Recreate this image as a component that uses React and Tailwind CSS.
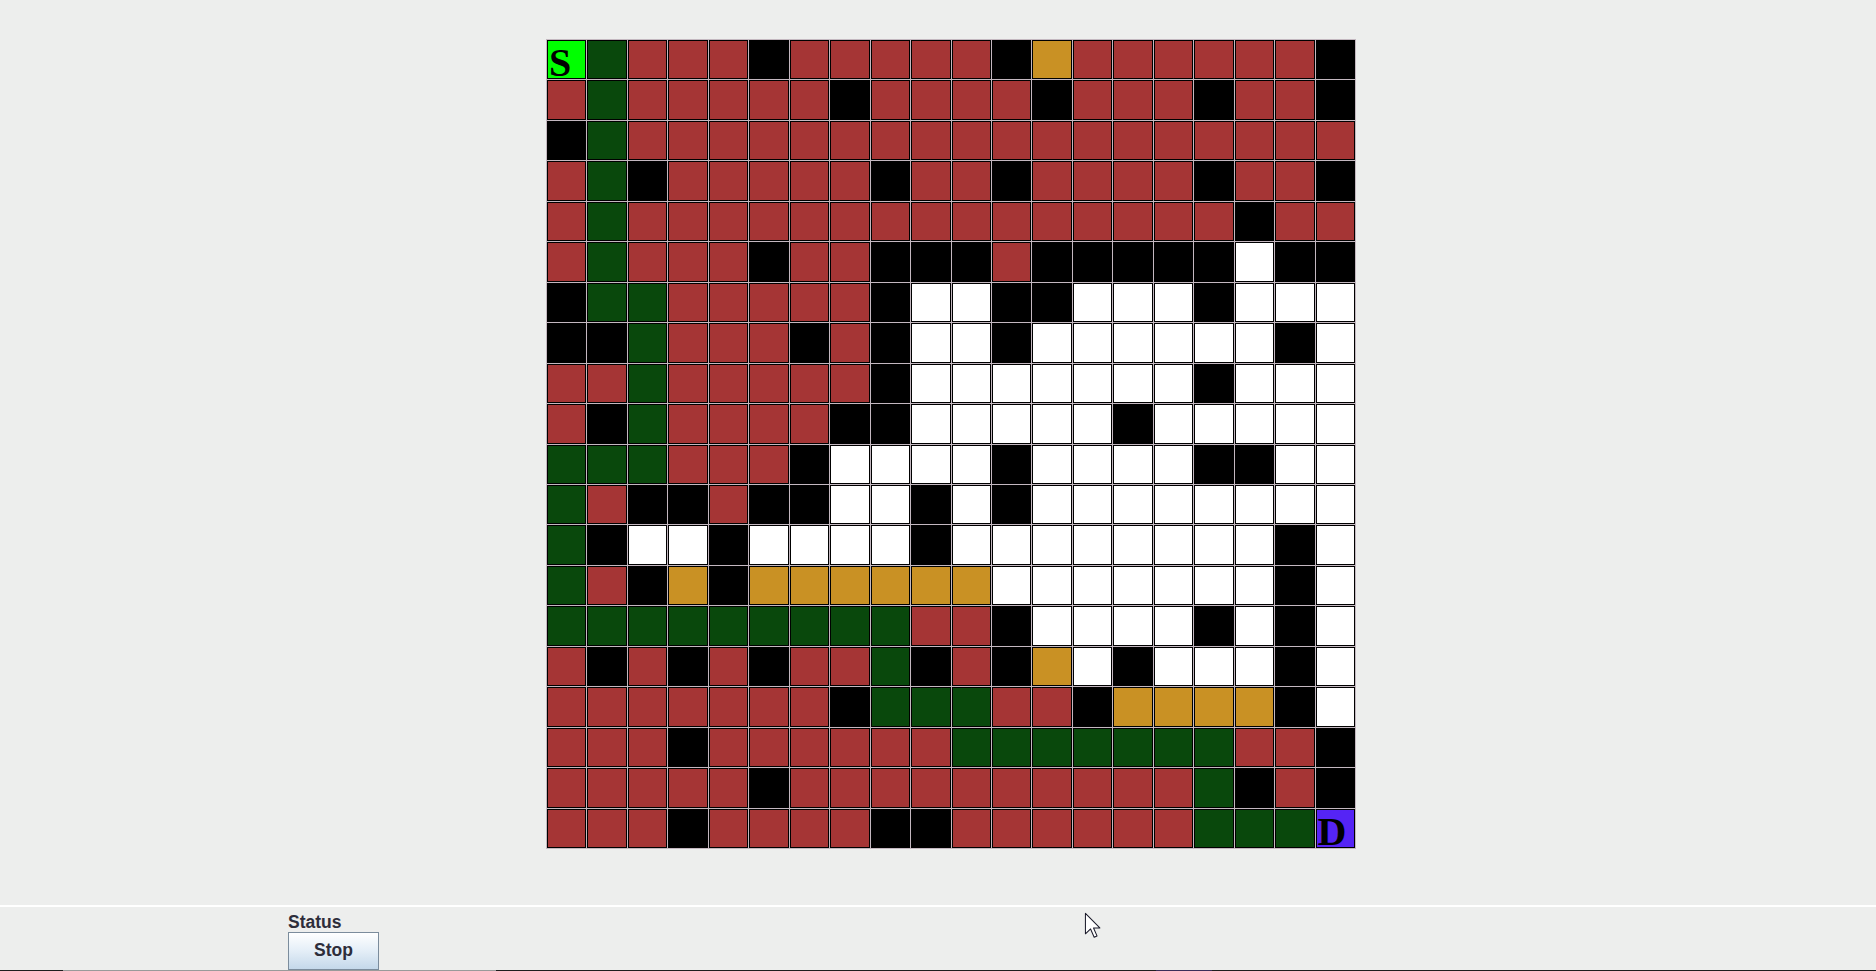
import React from "react"

// maze state, one string per row
const ROWS = [
  "SGRRRKRRRRRKYRRRRRRK",
  "RGRRRRRKRRRRKRRRKRRK",
  "KGRRRRRRRRRRRRRRRRRR",
  "RGKRRRRRKRRKRRRRKRRK",
  "RGRRRRRRRRRRRRRRRKRR",
  "RGRRRKRRKKKRKKKKKWKK",
  "KGGRRRRRKWWKKWWWKWWW",
  "KKGRRRKRKWWKWWWWWWKW",
  "RRGRRRRRKWWWWWWWKWWW",
  "RKGRRRRKKWWWWWKWWWWW",
  "GGGRRRKWWWWKWWWWKKWW",
  "GRKKRKKWWKWKWWWWWWWW",
  "GKWWKWWWWKWWWWWWWWKW",
  "GRKYKYYYYYYWWWWWWWKW",
  "GGGGGGGGGRRKWWWWKWKW",
  "RKRKRKRRGKRKYWKWWWKW",
  "RRRRRRRKGGGRRKYYYYKW",
  "RRRKRRRRRRGGGGGGGRRK",
  "RRRRRKRRRRRRRRRRGKRK",
  "RRRKRRRRKKRRRRRRGGGD",
]

const CELL = {
  R: "bg-[#a53535]",
  G: "bg-[#09480c]",
  K: "bg-black",
  W: "bg-white",
  Y: "bg-[#c99124]",
  S: "bg-[#00ff00]",
  D: "bg-[#5524f5]",
}

function Cell({ code }) {
  const label = code === "S" || code === "D" ? code : null
  return (
    <div className={`${CELL[code]} border border-black flex items-start`}>
      {label && (
        <span className="pl-px pt-[7px] text-[40px] leading-[30px] font-bold text-black [font-family:'Liberation_Serif',serif]">
          {label}
        </span>
      )}
    </div>
  )
}

export default function App() {
  return (
    <div className="relative w-[1876px] h-[971px] overflow-hidden bg-[#edeeed] flex flex-col [font-family:'Liberation_Sans',Arial,sans-serif]">
      {/* board */}
      <div className="h-[905px] flex justify-center pl-[26px] pt-[39px]">
        <div className="w-[810px] h-[810px] p-px gap-px bg-[#c4b8c0] grid grid-cols-20 grid-rows-20">
          {ROWS.map((row, r) =>
            row.split("").map((code, c) => <Cell key={`${r}-${c}`} code={code} />)
          )}
        </div>
      </div>

      <div className="h-[2px] bg-white" />

      {/* status panel */}
      <div className="flex-1 pl-[288px] pt-[5px] flex flex-col items-start">
        <div className="h-[20px] leading-[20px] text-[17.5px] font-bold text-[#2d2d3a]">Status</div>
        <button className="w-[91px] h-[38px] border border-[#7b8c9c] bg-gradient-to-b from-white via-[#e4eef7] to-[#c4d8ea] text-[17.5px] font-bold text-[#2d2d3a] leading-none">
          Stop
        </button>
      </div>

      <div className="h-px flex">
        <div className="w-[63px] bg-[#1e1e1e]" />
        <div className="w-[433px] bg-[#9a9a9a]" />
        <div className="w-[660px] bg-[#1e1e1e]" />
        <div className="w-[56px] bg-[#3a2d5a]" />
        <div className="flex-1 bg-[#1e1e1e]" />
      </div>

      {/* mouse pointer */}
      <svg className="absolute left-[1084px] top-[912px]" width="17" height="27" viewBox="0 0 13 21">
        <path d="M1 1 V17 L5 13.2 L7.8 19.6 L10 18.6 L7.3 12.4 H12.2 Z" fill="white" stroke="#1a1a2a" strokeWidth="0.8" strokeLinejoin="round" />
      </svg>
    </div>
  )
}
